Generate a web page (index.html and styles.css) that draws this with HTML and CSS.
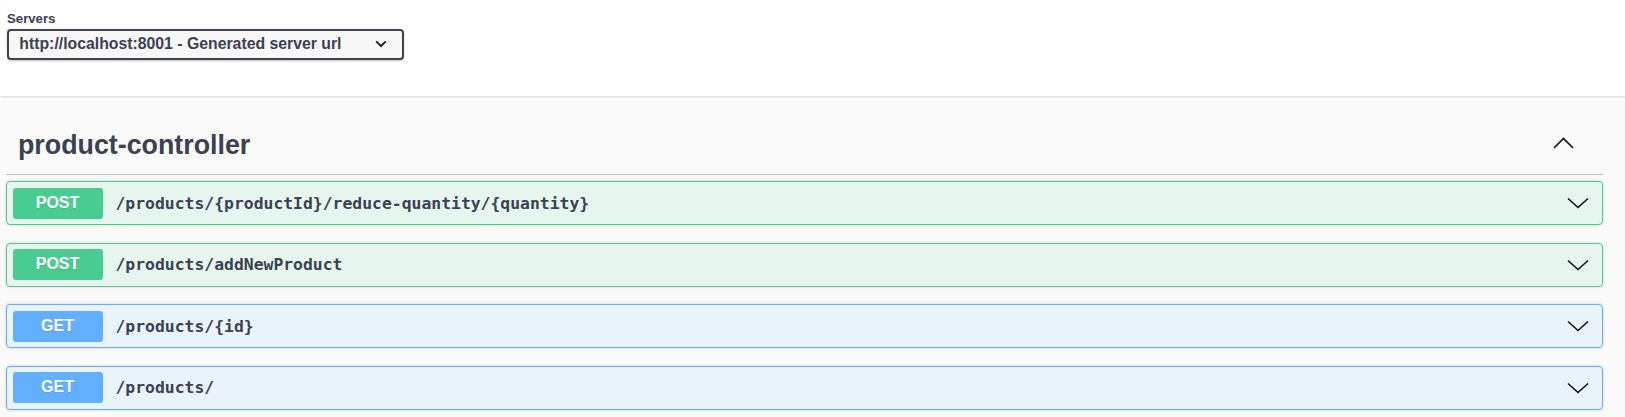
FILE: index.html
```html
<!DOCTYPE html>
<html lang="en">
<head>
<meta charset="utf-8">
<title>Swagger UI</title>
<link rel="stylesheet" href="styles.css">
</head>
<body>
<div class="scheme-container">
  <div class="servers">
    <label class="servers-title">Servers</label>
    <div class="select">
      <span class="select-text">http://localhost:8001 - Generated server url</span>
      <svg class="select-arrow" width="12" height="8" viewBox="0 0 12 8"><polyline points="1.2,1.4 6,6 10.8,1.4" fill="none" stroke="#222" stroke-width="2"/></svg>
    </div>
  </div>
</div>
<div class="tag-section">
  <h3 class="opblock-tag">
    <span>product-controller</span>
    <svg class="tag-arrow" width="21" height="12" viewBox="0 0 21 12"><polyline points="1,11 10.5,1.5 20,11" fill="none" stroke="#111" stroke-width="1.6"/></svg>
  </h3>
  <div class="opblock post">
    <div class="summary">
      <span class="method">POST</span>
      <span class="path">/products/{productId}/reduce-quantity/{quantity}</span>
      <svg class="op-arrow" width="22" height="12" viewBox="0 0 22 12"><polyline points="1,1.5 11,10.5 21,1.5" fill="none" stroke="#111" stroke-width="1.6"/></svg>
    </div>
  </div>
  <div class="opblock post">
    <div class="summary">
      <span class="method">POST</span>
      <span class="path">/products/addNewProduct</span>
      <svg class="op-arrow" width="22" height="12" viewBox="0 0 22 12"><polyline points="1,1.5 11,10.5 21,1.5" fill="none" stroke="#111" stroke-width="1.6"/></svg>
    </div>
  </div>
  <div class="opblock get">
    <div class="summary">
      <span class="method">GET</span>
      <span class="path">/products/{id}</span>
      <svg class="op-arrow" width="22" height="12" viewBox="0 0 22 12"><polyline points="1,1.5 11,10.5 21,1.5" fill="none" stroke="#111" stroke-width="1.6"/></svg>
    </div>
  </div>
  <div class="opblock get">
    <div class="summary">
      <span class="method">GET</span>
      <span class="path">/products/</span>
      <svg class="op-arrow" width="22" height="12" viewBox="0 0 22 12"><polyline points="1,1.5 11,10.5 21,1.5" fill="none" stroke="#111" stroke-width="1.6"/></svg>
    </div>
  </div>
</div>
</body>
</html>
```
FILE: styles.css
```css
html, body {
  margin: 0;
  padding: 0;
}
body {
  background: #fafafa;
  font-family: "Liberation Sans", Arial, sans-serif;
  color: #3b4151;
  overflow: hidden;
}
.scheme-container {
  background: #fff;
  height: 96px;
  box-shadow: 0 1px 2px 0 rgba(0, 0, 0, 0.15);
  box-sizing: border-box;
  padding: 11px 0 0 7px;
}
.servers {
  display: flex;
  flex-direction: column;
  align-items: flex-start;
}
.servers-title {
  font-size: 13.2px;
  font-weight: 700;
  line-height: 15px;
  margin-bottom: 3.3px;
}
.select {
  box-sizing: border-box;
  width: 397px;
  height: 31px;
  border: 2px solid #41444e;
  border-radius: 4px;
  background: #f7f7f7;
  box-shadow: 0 1px 2px 0 rgba(0, 0, 0, 0.25);
  display: flex;
  align-items: center;
  justify-content: space-between;
  padding: 0 15px 1px 10.3px;
}
.select-text {
  font-size: 15.8px;
  font-weight: 700;
  line-height: 18px;
  color: #3b4151;
}
.select-arrow {
  display: block;
}
.tag-section {
  padding: 24px 22px 0 6px;
}
.opblock-tag {
  margin: 0 0 6px;
  padding: 10px 0 14px 12px;
  display: flex;
  align-items: center;
  justify-content: space-between;
  border-bottom: 1px solid rgba(59, 65, 81, 0.3);
  font-size: 26.8px;
  font-weight: 700;
  line-height: 30px;
  color: #3b4151;
}
.tag-arrow {
  display: block;
  margin-right: 29px;
  margin-bottom: 4px;
}
.opblock {
  border: 1px solid;
  border-radius: 4px;
  box-shadow: 0 0 3px rgba(0, 0, 0, 0.19);
  margin-bottom: 17.6px;
}
.opblock.post {
  border-color: #49cc90;
  background: rgba(73, 204, 144, 0.1);
}
.opblock.get {
  border-color: #61affe;
  background: rgba(97, 175, 254, 0.1);
}
.summary {
  display: flex;
  align-items: center;
  padding: 5.5px;
}
.method {
  width: 90px;
  height: 31px;
  border-radius: 3px;
  color: #fff;
  font-size: 16px;
  font-weight: 700;
  text-align: center;
  line-height: 30px;
  text-shadow: 0 1px 0 rgba(0, 0, 0, 0.1);
  flex: none;
}
.post .method {
  background: #49cc90;
}
.get .method {
  background: #61affe;
}
.path {
  margin-left: 13px;
  flex: 1;
  font-family: "DejaVu Sans Mono", "Liberation Mono", monospace;
  font-size: 16.4px;
  font-weight: 700;
  color: #3b4151;
}
.op-arrow {
  display: block;
  margin-right: 7.5px;
}
```
